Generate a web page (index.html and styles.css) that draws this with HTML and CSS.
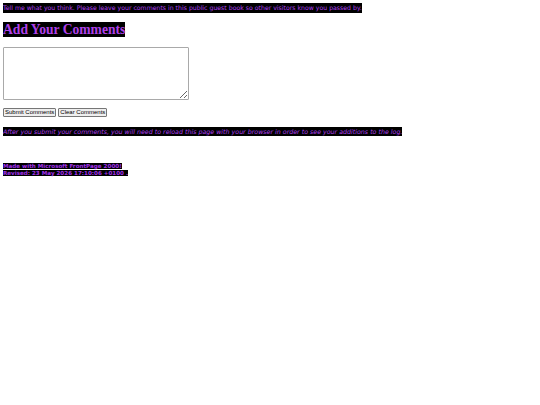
FILE: index.html
```html
<!DOCTYPE html>
<html>
<head>
<meta charset="utf-8">
<link rel="stylesheet" href="styles.css">
</head>
<body>
<p class="intro"><span class="hl">Tell me what you think. Please leave your comments in this public guest book so other visitors know you passed by.</span></p>
<h1 class="title"><span class="hl">Add Your Comments</span></h1>
<form class="form">
<textarea class="box"></textarea>
<div class="buttons">
<button type="button" class="btn">Submit Comments</button>
<button type="button" class="btn">Clear Comments</button>
</div>
</form>
<p class="note"><span class="hl">After you submit your comments, you will need to reload this page with your browser in order to see your additions to the log.</span></p>
<div class="footer">
<span class="hl">Made with Microsoft FrontPage 2000!</span><br>
<span class="hl">Revised: 23 May 2026 17:10:06 +0100 .</span>
</div>
</body>
</html>
```
FILE: styles.css
```css
html, body { background: #ffffff; }
body {
  margin: 3px;
  font-family: "DejaVu Sans", sans-serif;
  color: #b040f0;
}
.hl { background: #000000; }
.intro {
  margin: 0;
  font-size: 6.2px;
  line-height: 10px;
  height: 10px;
}
.intro .hl { padding: 2px 0; }
.title {
  margin: 9px 0 0 0;
  font-family: "Liberation Serif", serif;
  font-weight: bold;
  font-size: 13.6px;
  line-height: 16px;
  height: 16px;
  color: #b040e8;
}
.form { margin: 9px 0 0 0; }
.box {
  display: block;
  box-sizing: border-box;
  width: 186px;
  height: 53px;
  margin: 0;
  border: 1px solid #a9a9a9;
  border-radius: 1px;
  padding: 1px;
  resize: both;
}
.buttons {
  margin-top: 8px;
  display: flex;
  gap: 2px;
}
.btn {
  font-family: "Liberation Sans", Arial, sans-serif;
  font-size: 6px;
  height: 9px;
  line-height: 7px;
  padding: 0 1px;
  margin: 0;
  color: #000;
  background: #efefef;
  border: 1px solid #767676;
  border-radius: 1px;
}
.note {
  margin: 10px 0 0 0;
  font-size: 6.3px;
  line-height: 9px;
  font-style: italic;
}
.note .hl { padding: 1px 0; }
.footer {
  margin-top: 27px;
  font-size: 5.6px;
  font-weight: bold;
  line-height: 7px;
  color: #a030e8;
}
```
